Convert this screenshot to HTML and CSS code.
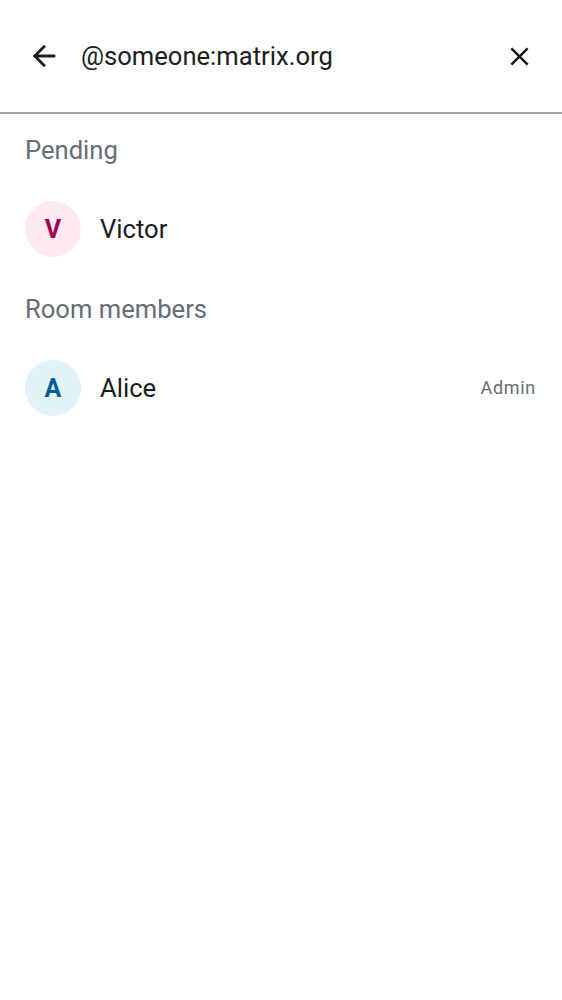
FILE: index.html
```html
<!DOCTYPE html>
<html lang="en">
<head>
<meta charset="utf-8">
<link rel="stylesheet" href="styles.css">
</head>
<body>
<header class="topbar">
  <button class="icon-btn back" aria-label="Back">
    <svg viewBox="0 0 24 24" width="34" height="34"><path d="M20 11H7.83l5.59-5.59L12 4l-8 8 8 8 1.41-1.41L7.83 13H20v-2z" fill="#1b1d22"/></svg>
  </button>
  <div class="query">@someone:matrix.org</div>
  <button class="icon-btn close" aria-label="Clear">
    <svg viewBox="0 0 24 24" width="31" height="31"><path d="M19 6.41 17.59 5 12 10.59 6.41 5 5 6.41 10.59 12 5 17.59 6.41 19 12 13.41 17.59 19 19 17.59 13.41 12z" fill="#1b1d22"/></svg>
  </button>
</header>
<main class="content">
  <section>
    <h2 class="section-title">Pending</h2>
    <div class="row">
      <div class="avatar avatar-pink">V</div>
      <div class="name">Victor</div>
    </div>
  </section>
  <section>
    <h2 class="section-title">Room members</h2>
    <div class="row">
      <div class="avatar avatar-blue">A</div>
      <div class="name">Alice</div>
      <div class="role">Admin</div>
    </div>
  </section>
</main>
</body>
</html>
```
FILE: styles.css
```css
* { box-sizing: border-box; }
html, body { margin: 0; padding: 0; background: #ffffff; }
body { font-family: Roboto, "Noto Sans", sans-serif; color: #1b1d22; }

.topbar {
  height: 114px;
  display: flex;
  align-items: center;
  padding: 0 27px 0 26px;
  border-bottom: 2px solid #9ea3a9;
}
.icon-btn {
  border: 0;
  background: none;
  padding: 0;
  display: flex;
  align-items: center;
  justify-content: center;
  cursor: pointer;
}
.back { width: 35px; height: 35px; }
.close { width: 32px; height: 32px; }
.query {
  flex: 1;
  margin-left: 20px;
  font-size: 25.6px;
  line-height: 30px;
  color: #1b1d22;
}

.content { padding-top: 3px; }
.section-title {
  margin: 0;
  padding: 18px 25px 17px;
  font-size: 25.6px;
  line-height: 30px;
  font-weight: 400;
  color: #656d77;
}
.row {
  display: flex;
  align-items: center;
  padding: 19px 26px 19px 25px;
}
.avatar {
  width: 56px;
  height: 56px;
  border-radius: 50%;
  display: flex;
  align-items: center;
  justify-content: center;
  font-size: 25px;
  font-weight: 700;
  flex-shrink: 0;
}
.avatar-pink { background: #fde9ef; color: #a3014f; }
.avatar-blue { background: #e1f3f9; color: #005c94; }
.name {
  flex: 1;
  margin-left: 19px;
  font-size: 25.6px;
  line-height: 30px;
  color: #1b1d22;
}
.role {
  font-size: 18px;
  line-height: 22px;
  color: #656d77;
  letter-spacing: 0.7px;
}
```
